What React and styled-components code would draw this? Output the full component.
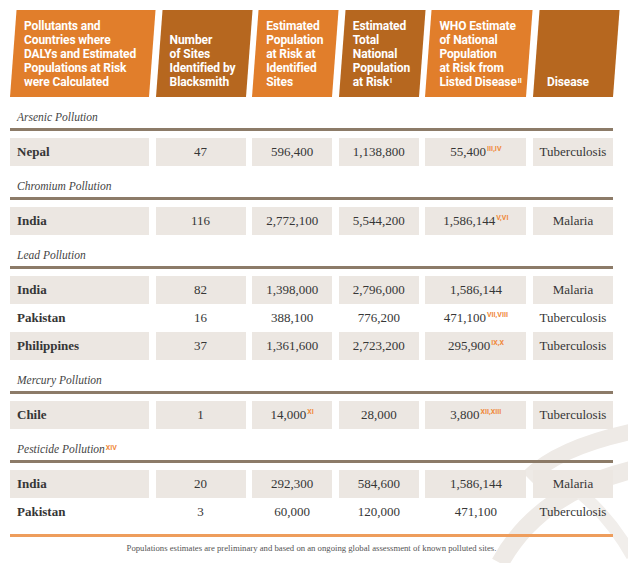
import React from 'react';
import styled, { createGlobalStyle } from 'styled-components';

const Global = createGlobalStyle`
  html, body { margin: 0; padding: 0; background: #ffffff; }
  body { width: 628px; height: 563px; overflow: hidden; }
`;

const LIGHT = '#E17E2B';
const DARK = '#B6671F';
const SHADE = '#ECE7E2';
const RULE = '#8C7B68';
const TEXT = '#363636';
const SUP = '#F08A3C';

const Page = styled.div`
  position: relative;
  width: 628px;
  height: 563px;
  padding: 10px 0 0 10px;
  box-sizing: border-box;
  overflow: hidden;
  background: #fff;
`;

const Watermark = styled.svg`
  position: absolute;
  left: 0;
  top: 0;
  width: 628px;
  height: 563px;
  z-index: 0;
  pointer-events: none;
`;

const Table = styled.div`
  position: relative;
  z-index: 1;
  width: 603px;
`;

const Grid = styled.div`
  display: grid;
  grid-template-columns: 139px 90px 80px 80px 101px 80px;
  column-gap: 6.6px;
`;

const HeaderRow = styled(Grid)`
  height: 87px;
`;

const HeadCell = styled.div`
  position: relative;
  isolation: isolate;
  display: flex;
  align-items: flex-end;
  padding: 0 4px 8px 14px;
  color: #fff;
  font-family: Roboto, "Liberation Sans", sans-serif;
  font-weight: 700;
  font-size: 12px;
  line-height: 14px;
  letter-spacing: -0.1px;
  &::before {
    content: '';
    position: absolute;
    inset: 0;
    background: ${(p) => (p.$dark ? DARK : LIGHT)};
    transform: skewX(-4.3deg);
    transform-origin: bottom left;
    z-index: -1;
  }
`;

const Section = styled.section`
  margin-top: 13px;
`;

const SectionTitle = styled.div`
  height: 14px;
  line-height: 14px;
  padding-left: 7px;
  font-family: "Liberation Serif", serif;
  font-style: italic;
  font-size: 11.5px;
  color: #444;
`;

const Rule = styled.div`
  margin-top: 4px;
  height: 3px;
  background: ${RULE};
`;

const Rows = styled.div`
  margin-top: 7px;
`;

const Row = styled(Grid)`
  height: 28px;
`;

const Cell = styled.div`
  display: flex;
  align-items: center;
  justify-content: ${(p) => (p.$left ? 'flex-start' : 'center')};
  padding-left: ${(p) => (p.$left ? '7px' : '0')};
  background: ${(p) => (p.$shaded ? SHADE : 'transparent')};
  font-family: "Liberation Serif", serif;
  font-size: 13px;
  font-weight: ${(p) => (p.$left ? 700 : 400)};
  color: ${TEXT};
  white-space: nowrap;
`;

const Sup = styled.sup`
  font-family: Roboto, "Liberation Sans", sans-serif;
  font-weight: 700;
  font-size: 7px;
  line-height: 0;
  color: ${(p) => (p.$white ? '#fff' : SUP)};
  vertical-align: baseline;
  position: relative;
  top: -3.5px;
  margin-left: 1px;
  font-style: normal;
`;

const FooterRule = styled.div`
  margin-top: 8px;
  height: 3px;
  background: #EE9D5C;
`;

const FooterNote = styled.div`
  margin-top: 6px;
  text-align: center;
  font-family: "Liberation Serif", serif;
  font-size: 8.7px;
  line-height: 10px;
  color: #555;
`;

const sections = [
  {
    title: 'Arsenic Pollution',
    rows: [['Nepal', '47', '596,400', '1,138,800', ['55,400', 'III,IV'], 'Tuberculosis']],
  },
  {
    title: 'Chromium Pollution',
    rows: [['India', '116', '2,772,100', '5,544,200', ['1,586,144', 'V,VI'], 'Malaria']],
  },
  {
    title: 'Lead Pollution',
    rows: [
      ['India', '82', '1,398,000', '2,796,000', ['1,586,144'], 'Malaria'],
      ['Pakistan', '16', '388,100', '776,200', ['471,100', 'VII,VIII'], 'Tuberculosis'],
      ['Philippines', '37', '1,361,600', '2,723,200', ['295,900', 'IX,X'], 'Tuberculosis'],
    ],
  },
  {
    title: 'Mercury Pollution',
    rows: [['Chile', '1', ['14,000', 'XI'], '28,000', ['3,800', 'XII,XIII'], 'Tuberculosis']],
  },
  {
    title: 'Pesticide Pollution',
    sup: 'XIV',
    rows: [
      ['India', '20', '292,300', '584,600', ['1,586,144'], 'Malaria'],
      ['Pakistan', '3', '60,000', '120,000', ['471,100'], 'Tuberculosis'],
    ],
  },
];

const renderValue = (v) =>
  Array.isArray(v) ? (
    <>
      {v[0]}
      {v[1] && <Sup>{v[1]}</Sup>}
    </>
  ) : (
    v
  );

export default function App() {
  return (
    <>
      <Global />
      <Page>
        <Watermark viewBox="0 0 628 563">
          <path d="M 528 478 Q 560 446 640 430" fill="none" stroke="#EEEAE6" strokeWidth="16" />
          <path d="M 500 563 Q 540 490 640 468" fill="none" stroke="#EEEAE6" strokeWidth="18" />
          <path d="M 568 484 Q 606 510 632 556" fill="none" stroke="#F1EEEB" strokeWidth="12" />
        </Watermark>
        <Table>
          <HeaderRow>
            <HeadCell>
              <div>
                Pollutants and<br />Countries where<br />DALYs and Estimated<br />Populations at Risk<br />were Calculated
              </div>
            </HeadCell>
            <HeadCell $dark>
              <div>
                Number<br />of Sites<br />Identified by<br />Blacksmith
              </div>
            </HeadCell>
            <HeadCell>
              <div>
                Estimated<br />Population<br />at Risk at<br />Identified<br />Sites
              </div>
            </HeadCell>
            <HeadCell $dark>
              <div>
                Estimated<br />Total<br />National<br />Population<br />at Risk<Sup $white>I</Sup>
              </div>
            </HeadCell>
            <HeadCell>
              <div>
                WHO Estimate<br />of National<br />Population<br />at Risk from<br />Listed Disease<Sup $white>II</Sup>
              </div>
            </HeadCell>
            <HeadCell $dark>
              <div>Disease</div>
            </HeadCell>
          </HeaderRow>

          {sections.map((s) => (
            <Section key={s.title}>
              <SectionTitle>
                {s.title}
                {s.sup && <Sup>{s.sup}</Sup>}
              </SectionTitle>
              <Rule />
              <Rows>
                {s.rows.map((r, ri) => {
                  const shaded = ri % 2 === 0;
                  return (
                    <Row key={ri}>
                      {r.map((v, ci) => (
                        <Cell key={ci} $left={ci === 0} $shaded={shaded}>
                          {renderValue(v)}
                        </Cell>
                      ))}
                    </Row>
                  );
                })}
              </Rows>
            </Section>
          ))}

          <FooterRule />
          <FooterNote>
            Populations estimates are preliminary and based on an ongoing global assessment of known polluted sites.
          </FooterNote>
        </Table>
      </Page>
    </>
  );
}
